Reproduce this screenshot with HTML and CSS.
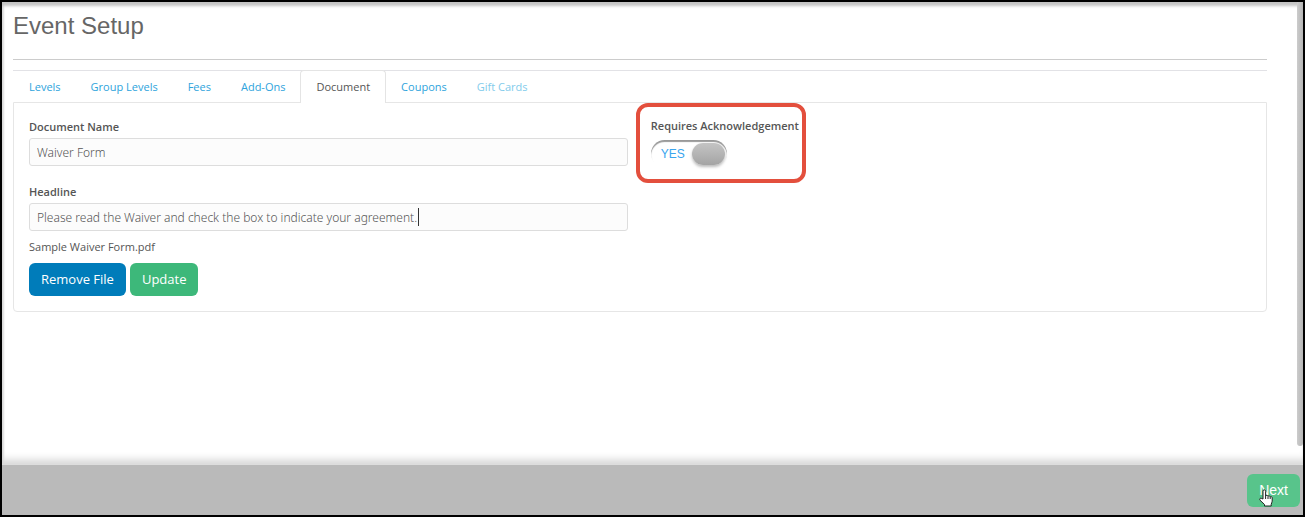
FILE: index.html
```
<!DOCTYPE html>
<html lang="en">
<head>
  <meta charset="UTF-8">
  <title>Event Setup</title>
  <link rel="stylesheet" href="styles.css">
</head>
<body>
  <div class="window">
    <main class="content">
      <h1>Event Setup</h1>

      <nav class="tabs">
        <a href="#levels">Levels</a>
        <a href="#group-levels">Group Levels</a>
        <a href="#fees">Fees</a>
        <a href="#add-ons">Add-Ons</a>
        <a href="#document" class="active" aria-current="page">Document</a>
        <a href="#coupons">Coupons</a>
        <a href="#gift-cards" class="muted">Gift Cards</a>
      </nav>

      <form class="panel" id="document">
        <div class="fields">
          <div class="field">
            <label for="docName">Document Name</label>
            <input type="text" id="docName" value="Waiver Form">
          </div>
          <div class="field">
            <label for="headline">Headline</label>
            <input type="text" id="headline" value="Please read the Waiver and check the box to indicate your agreement.">
            <span class="caret"></span>
          </div>
          <p class="filename">Sample Waiver Form.pdf</p>
          <div class="actions">
            <button type="button" class="btn blue">Remove File</button>
            <button type="button" class="btn green">Update</button>
          </div>
        </div>

        <div class="side">
          <div class="callout">
            <label for="ack">Requires Acknowledgement</label>
            <div class="switch">
              <input type="checkbox" id="ack" checked>
              <span class="state">YES</span>
              <span class="knob"></span>
            </div>
          </div>
        </div>
      </form>
    </main>

    <div class="scrollbar"></div>

    <footer class="footer">
      <button type="button" class="btn next">Next</button>
      <svg class="pointer" width="14" height="18" viewBox="0 0 14 18">
        <path d="M4 10V2.2C4 .3 6.6.3 6.6 2.2V7c.3-1 2.3-.8 2.4.4.4-.9 2.1-.6 2.2.5.5-.7 2-.3 2 .9v3.4c0 1.4-1 2-1 3.200V17H5.500v-1.500L1 11.200C0 9.800 1.600 8.500 2.700 9.500z" fill="#fff" stroke="#222" stroke-width="1"/>
        <path d="M6.600 7v3M9 7.500v2.500M11.200 8v2" stroke="#222" stroke-width="1" fill="none"/>
      </svg>
    </footer>
  </div>
</body>
</html>
```

FILE: styles.css
```
* { box-sizing: border-box; }
body { margin: 0; font-family: "Open Sans", "Noto Sans", sans-serif; font-size: 11px; color: #555; background: #fff; }
a { color: #2ea3dc; text-decoration: none; }

.window { position: relative; display: flex; flex-direction: column; min-height: 100vh; border: 2px solid #000; }
.content { flex: 1; padding: 9px 36px 12px 11px; box-shadow: inset 0 5px 3px -1px #c4c4c4, inset 3px 0 2px -1px #ddd, inset 0 -10px 8px -6px #d4d4d4; }

h1 { margin: 0; padding-bottom: 18px; border-bottom: 1px solid #ccc; font-family: "Liberation Sans", Arial, sans-serif; font-size: 24px; font-weight: normal; line-height: 30px; color: #666; }

.tabs { display: flex; align-items: flex-end; margin-top: 10px; padding-left: 1px; border-top: 1px solid #e2e2e6; }
.tabs a { padding: 0 14px 1px; border: 1px solid transparent; border-bottom: 0; line-height: 29px; }
.tabs .active { position: relative; margin: -3px 0 -1px; padding: 1px 15px 2px; border-color: #e4e4e4; border-radius: 4px 4px 0 0; background: #fff; color: #555; }
.tabs .muted { color: #82cbeb; }

.panel { display: flex; padding: 16px 15px 15px; border: 1px solid #e6e6e6; border-radius: 0 0 4px 4px; }
.fields { flex: 0 0 49%; }
.field { position: relative; margin-bottom: 18px; }
.field label, .callout label { display: block; font-weight: 600; line-height: 16px; }
.field input { display: block; width: 100%; height: 28px; margin-top: 3px; padding: 0 7px; border: 1px solid #ddd; border-radius: 3px; background: #fcfcfc; color: #555; font-family: "Noto Sans", "Open Sans", sans-serif; font-size: 12px; font-weight: 300; }
.caret { position: absolute; left: 389px; bottom: 5px; width: 1px; height: 18px; background: #333; }
.filename { margin: -10px 0 8px; line-height: 16px; }

.actions { display: flex; gap: 4px; }
.btn { height: 33px; padding: 0 12px 2px; border: 0; border-radius: 6px; color: #fff; font-family: inherit; font-size: 13px; cursor: pointer; }
.blue { background: #007cba; }
.green { background: #3db87a; }

.side { padding-left: 8px; }
.callout { margin-top: -16px; padding: 11px 3px 12px 11px; border: 4px solid #e34f3d; border-radius: 12px; }
.switch { position: relative; display: flex; align-items: center; justify-content: space-between; width: 76px; height: 27px; margin-top: 6px; padding: 0 2px 0 10px; border-radius: 14px; box-shadow: inset 0 2px 1px #999; }
.switch input { position: absolute; inset: 0; width: 100%; height: 100%; margin: 0; opacity: 0; cursor: pointer; }
.state { color: #3aa5ee; font-family: "Liberation Sans", Arial, sans-serif; font-size: 12px; }
.knob { width: 33px; height: 22px; border-radius: 11px; background: linear-gradient(#c4c4c4, #a4a4a4); box-shadow: 0 2px 3px #bbb; }

.scrollbar { position: absolute; top: 0; right: 0; width: 6px; height: 444px; border-radius: 0 0 3px 3px; background: linear-gradient(90deg, #ccc, #b5b5b5); }

.footer { position: relative; display: flex; justify-content: flex-end; padding: 9px 3px 8px; border-top: 1px solid #ddd; background: #bababa; }
.next { background: #58c48b; font-family: "Liberation Sans", Arial, sans-serif; font-size: 14px; }
.pointer { position: absolute; right: 30px; bottom: 8px; }
```
